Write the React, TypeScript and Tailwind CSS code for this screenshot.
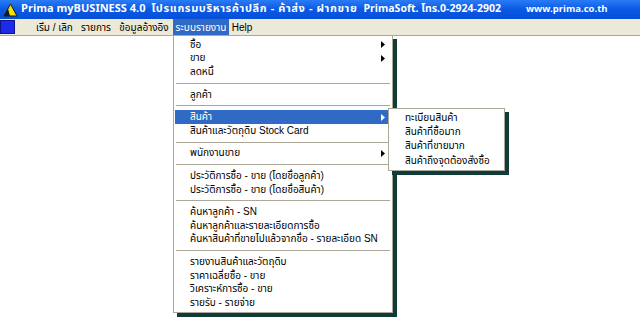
import React from "react";

const TITLE_FONT = "font-['Tahoma','Noto_Sans_Thai','Noto_Sans','DejaVu_Sans',sans-serif]";
const MENU_FONT = "font-['Liberation_Sans','Tahoma','Noto_Sans_Thai','Noto_Sans',sans-serif]";

type Entry = { label?: string; arrow?: boolean; active?: boolean; sep?: boolean };

const REPORT_MENU: Entry[] = [
  { label: "ซื้อ", arrow: true },
  { label: "ขาย", arrow: true },
  { label: "ลดหนี้" },
  { sep: true },
  { label: "ลูกค้า" },
  { sep: true },
  { label: "สินค้า", arrow: true, active: true },
  { label: "สินค้าและวัตถุดิบ Stock Card" },
  { sep: true },
  { label: "พนักงานขาย", arrow: true },
  { sep: true },
  { label: "ประวัติการซื้อ - ขาย (โดยชื่อลูกค้า)" },
  { label: "ประวัติการซื้อ - ขาย (โดยชื่อสินค้า)" },
  { sep: true },
  { label: "ค้นหาลูกค้า - SN" },
  { label: "ค้นหาลูกค้าและรายละเอียดการซื้อ" },
  { label: "ค้นหาสินค้าที่ขายไปแล้วจากชื่อ - รายละเอียด SN" },
  { sep: true },
  { label: "รายงานสินค้าและวัตถุดิบ" },
  { label: "ราคาเฉลี่ยซื้อ - ขาย" },
  { label: "วิเคราะห์การซื้อ - ขาย" },
  { label: "รายรับ - รายจ่าย" },
];

const PRODUCT_MENU = [
  "ทะเบียนสินค้า",
  "สินค้าที่ซื้อมาก",
  "สินค้าที่ขายมาก",
  "สินค้าถึงจุดต้องสั่งซื้อ",
];

function Arrow({ white }: { white?: boolean }) {
  return (
    <svg width="4" height="7" viewBox="0 0 4 7" className="shrink-0">
      <path d="M0 0 L4 3.5 L0 7 Z" fill={white ? "#ffffff" : "#000000"} />
    </svg>
  );
}

function AppIcon() {
  return (
    <svg width="15" height="14" viewBox="0 0 15 14" className="shrink-0">
      <path d="M1 13 L7.5 1 L14 13 Z" fill="#f2e400" stroke="#1a1a1a" strokeWidth="1" />
      <path d="M1 13 L5 5.5 L7 13 Z" fill="#1a1a1a" />
    </svg>
  );
}

function MenuRow({ entry }: { entry: Entry }) {
  if (entry.sep) {
    return (
      <div className="h-[9px] flex items-center px-[2px]">
        <div className="h-px w-full bg-[#aca899]" />
      </div>
    );
  }
  return (
    <div
      className={`h-[13.6px] ml-[1px] mr-[3px] pl-[15px] pr-[4px] flex items-center justify-between ${
        entry.active ? "bg-[#316ac5] text-white" : "text-black"
      }`}
    >
      <span className="leading-none whitespace-nowrap">{entry.label}</span>
      {entry.arrow && <Arrow white={entry.active} />}
    </div>
  );
}

export default function App() {
  return (
    <div className={`relative w-[640px] h-[324px] overflow-hidden bg-white ${MENU_FONT}`}>
      {/* title bar */}
      <div
        className={`h-[19px] flex items-center pl-[3px] bg-gradient-to-b from-[#2a7cf5] via-[#0a58e4] to-[#0650d8] text-white font-bold whitespace-nowrap ${TITLE_FONT}`}
      >
        <AppIcon />
        <span className="ml-[3px] text-[11px]">Prima myBUSINESS 4.0</span>
        <span className="ml-[6px] text-[11px] tracking-[0.6px]">โปรแกรมบริหารค้าปลีก - ค้าส่ง - ฝากขาย</span>
        <span className="ml-[6px] text-[10.5px]">PrimaSoft. โทร.0-2924-2902</span>
        <span className="ml-[25px] text-[9.5px]">www.prima.co.th</span>
      </div>

      {/* menu bar */}
      <div className="h-[16px] flex items-stretch bg-[#ece9d8] text-[10px] text-black">
        <div className="w-[15px] my-[1px] bg-[#1d2be8] border border-[#10148a]" />
        <div className="flex items-stretch ml-[17px]">
          <div className="w-[45px] flex items-center justify-center">เริ่ม / เลิก</div>
          <div className="w-[38px] flex items-center justify-center">รายการ</div>
          <div className="w-[58px] flex items-center justify-center">ข้อมูลอ้างอิง</div>
          <div className="w-[56px] flex items-center justify-center bg-[#316ac5] text-white">ระบบรายงาน</div>
          <div className="w-[26px] flex items-center justify-center">Help</div>
        </div>
      </div>

      {/* client area */}
      <div className="h-[289px] border-t border-[#aca899] bg-white" />

      {/* report drop-down */}
      <div className="absolute left-[173px] top-[35px] w-[220px] pt-[2px] pb-[2px] bg-white border border-[#aca899] shadow-[4px_4px_0_0_#113b39] text-[10px]">
        {REPORT_MENU.map((e, i) => (
          <MenuRow key={i} entry={e} />
        ))}
      </div>

      {/* product sub-menu */}
      <div className="absolute left-[388px] top-[108px] w-[117px] pt-[2px] pb-[2px] bg-white border border-[#aca899] shadow-[4px_4px_0_0_#113b39] text-[10px]">
        {PRODUCT_MENU.map((label) => (
          <div key={label} className="h-[14.2px] pl-[16px] flex items-center text-black whitespace-nowrap">
            <span className="leading-none">{label}</span>
          </div>
        ))}
      </div>
    </div>
  );
}
